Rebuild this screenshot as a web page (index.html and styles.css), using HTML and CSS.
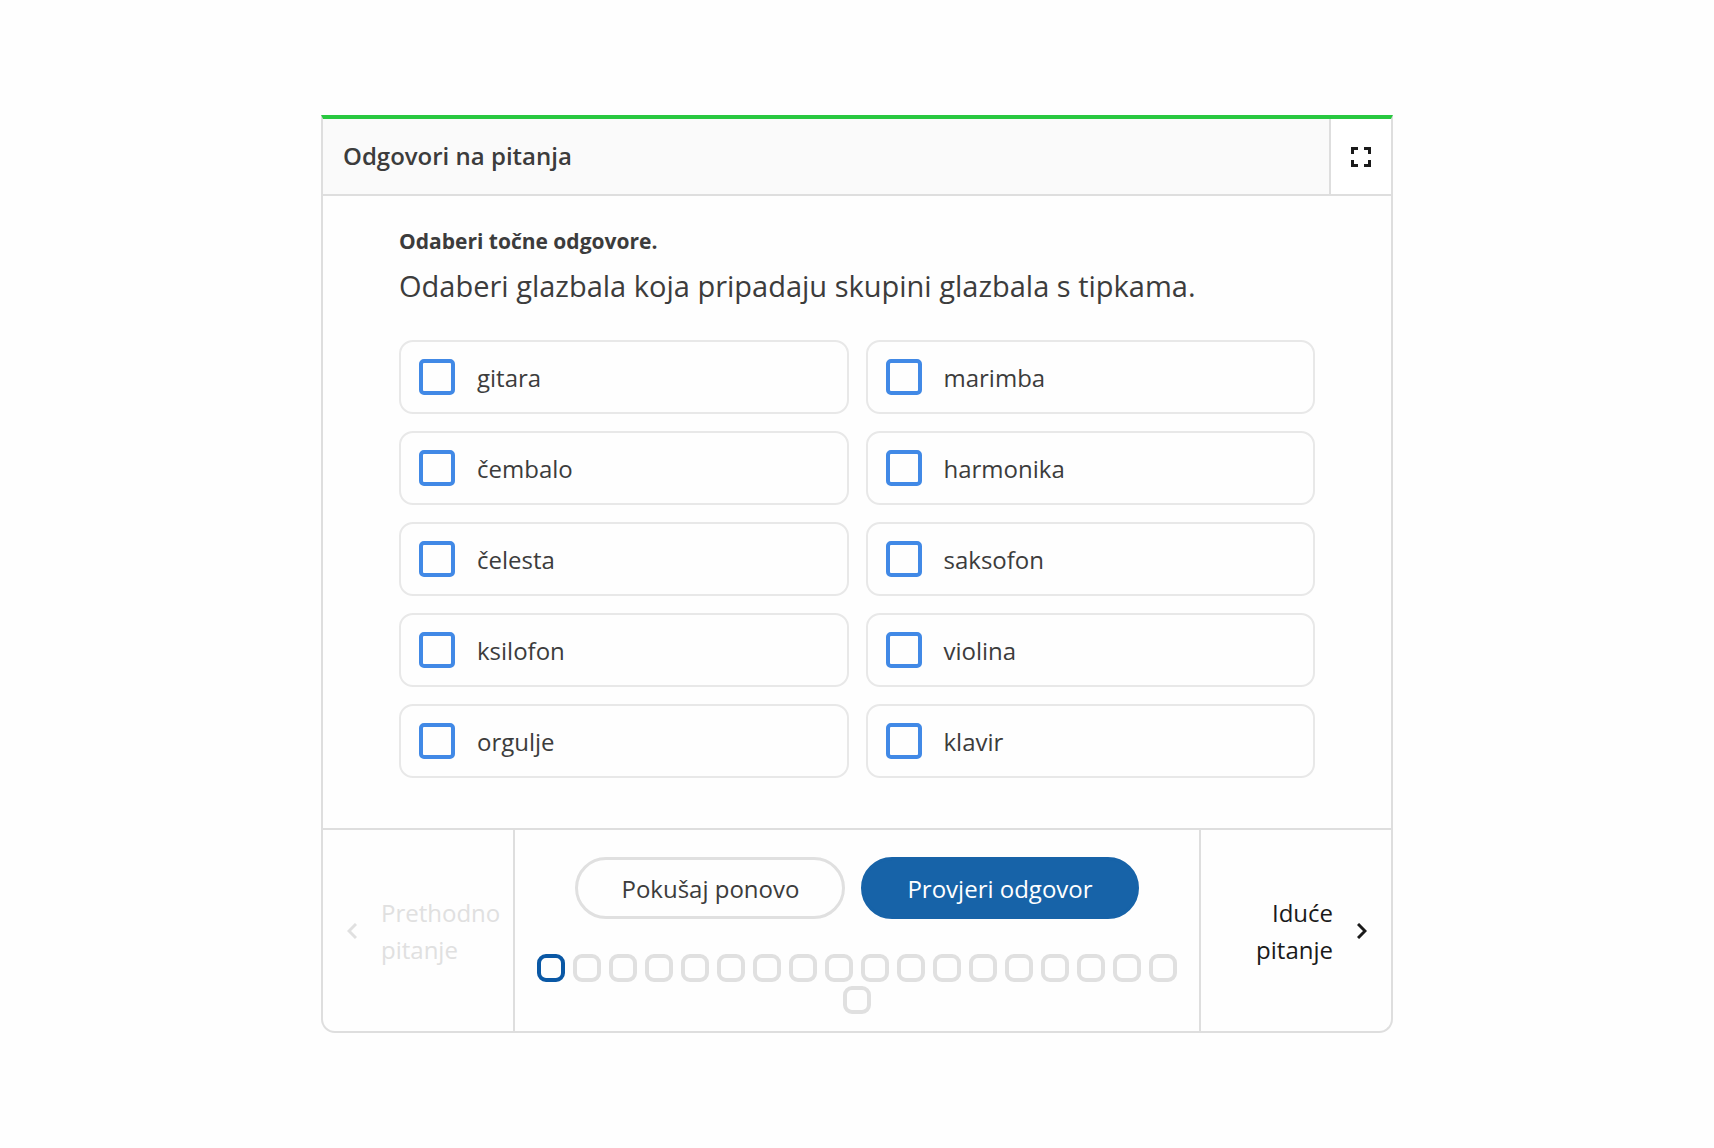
FILE: index.html
```html
<!DOCTYPE html>
<html lang="hr">
<head>
    <meta charset="UTF-8">
    <meta name="viewport" content="width=device-width, initial-scale=1.0">
    <title>Odgovori na pitanja</title>
    <link rel="stylesheet" href="styles.css">
</head>
<body>

    <main class="quiz">
        <!-- Title bar -->
        <header class="quiz-header">
            <h1>Odgovori na pitanja</h1>
            <button type="button" class="fullscreen" aria-label="Cijeli zaslon">
                <svg width="20" height="20" viewBox="0 0 20 20" fill="none" stroke="currentColor" stroke-width="3">
                    <path d="M1.5 7V1.5H7M13 1.5h5.500V7M18.500 13v5.500H13M7 18.500H1.500V13"/>
                </svg>
            </button>
        </header>

        <!-- Question and answers -->
        <section class="question">
            <p class="instruction">Odaberi točne odgovore.</p>
            <h2>Odaberi glazbala koja pripadaju skupini glazbala s tipkama.</h2>
            <div class="answers">
                <label class="answer"><input type="checkbox"><span>gitara</span></label>
                <label class="answer"><input type="checkbox"><span>marimba</span></label>
                <label class="answer"><input type="checkbox"><span>čembalo</span></label>
                <label class="answer"><input type="checkbox"><span>harmonika</span></label>
                <label class="answer"><input type="checkbox"><span>čelesta</span></label>
                <label class="answer"><input type="checkbox"><span>saksofon</span></label>
                <label class="answer"><input type="checkbox"><span>ksilofon</span></label>
                <label class="answer"><input type="checkbox"><span>violina</span></label>
                <label class="answer"><input type="checkbox"><span>orgulje</span></label>
                <label class="answer"><input type="checkbox"><span>klavir</span></label>
            </div>
        </section>

        <!-- Navigation -->
        <footer class="quiz-footer">
            <button type="button" class="nav prev" disabled>
                <svg width="10" height="16" viewBox="0 0 10 16" fill="none" stroke="currentColor" stroke-width="3">
                    <path d="M9 1L2 8l7 7"/>
                </svg>
                <span>Prethodno pitanje</span>
            </button>
            <div class="controls">
                <div class="actions">
                    <button type="button" class="btn">Pokušaj ponovo</button>
                    <button type="button" class="btn btn-primary">Provjeri odgovor</button>
                </div>
                <div class="steps">
                    <button type="button" class="step active" aria-label="Pitanje 1"></button>
                    <button type="button" class="step" aria-label="Pitanje 2"></button>
                    <button type="button" class="step" aria-label="Pitanje 3"></button>
                    <button type="button" class="step" aria-label="Pitanje 4"></button>
                    <button type="button" class="step" aria-label="Pitanje 5"></button>
                    <button type="button" class="step" aria-label="Pitanje 6"></button>
                    <button type="button" class="step" aria-label="Pitanje 7"></button>
                    <button type="button" class="step" aria-label="Pitanje 8"></button>
                    <button type="button" class="step" aria-label="Pitanje 9"></button>
                    <button type="button" class="step" aria-label="Pitanje 10"></button>
                    <button type="button" class="step" aria-label="Pitanje 11"></button>
                    <button type="button" class="step" aria-label="Pitanje 12"></button>
                    <button type="button" class="step" aria-label="Pitanje 13"></button>
                    <button type="button" class="step" aria-label="Pitanje 14"></button>
                    <button type="button" class="step" aria-label="Pitanje 15"></button>
                    <button type="button" class="step" aria-label="Pitanje 16"></button>
                    <button type="button" class="step" aria-label="Pitanje 17"></button>
                    <button type="button" class="step" aria-label="Pitanje 18"></button>
                    <button type="button" class="step" aria-label="Pitanje 19"></button>
                </div>
            </div>
            <button type="button" class="nav next">
                <span>Iduće pitanje</span>
                <svg width="10" height="16" viewBox="0 0 10 16" fill="none" stroke="currentColor" stroke-width="3">
                    <path d="M1 1l7 7-7 7"/>
                </svg>
            </button>
        </footer>
    </main>

</body>
</html>
```
FILE: styles.css
```css
:root {
    --color-text: #3c3c3c;
    --color-dark: #1a1a1a;
    --color-line: #dedede;
    --color-line-light: #e0e0e0;
    --color-answer-line: #e8e8e8;
    --color-header: #fafafa;
    --color-green: #28c840;
    --color-check: #4189e6;
    --color-primary: #1763a8;
    --color-active: #0a58a5;
    --font-family: 'Open Sans', sans-serif;
}

* {
    margin: 0;
    padding: 0;
    box-sizing: border-box;
}

body {
    background-color: #fefefe;
    color: var(--color-text);
    font-family: var(--font-family);
    font-size: 24px;
    line-height: 37px;
}

button {
    font: inherit;
    color: inherit;
    background: none;
    border: none;
    cursor: pointer;
}

/* Card */
.quiz {
    max-width: 1072px;
    margin: 115px auto;
    border: 2px solid var(--color-line);
    border-top: 4px solid var(--color-green);
    border-radius: 0 0 14px 14px;
}

.quiz-header {
    display: flex;
    background-color: var(--color-header);
    border-bottom: 2px solid var(--color-line);
}

.quiz-header h1 {
    flex: 1;
    padding: 18px 20px 20px;
    font-size: 24px;
    font-weight: 600;
}

.fullscreen {
    display: flex;
    align-items: center;
    justify-content: center;
    width: 62px;
    background-color: #fff;
    border-left: 2px solid var(--color-line);
    color: var(--color-dark);
}

/* Question */
.question {
    padding: 29px 76px 50px;
}

.instruction {
    font-size: 21px;
    font-weight: 700;
    line-height: 32px;
}

.question h2 {
    margin-bottom: 25px;
    font-size: 29px;
    font-weight: 400;
    line-height: 58px;
}

.answers {
    display: grid;
    grid-template-columns: 1fr 1fr;
    gap: 17px;
}

.answer {
    display: flex;
    align-items: center;
    gap: 22px;
    height: 74px;
    padding: 0 18px;
    border: 2px solid var(--color-answer-line);
    border-radius: 14px;
    cursor: pointer;
}

.answer input {
    appearance: none;
    width: 36px;
    height: 36px;
    border: 4px solid var(--color-check);
    border-radius: 5px;
}

.answer input:checked {
    background-color: var(--color-check);
}

/* Footer */
.quiz-footer {
    display: flex;
    border-top: 2px solid var(--color-line);
}

.nav {
    display: flex;
    align-items: center;
    gap: 24px;
    width: 192px;
    padding: 0 24px;
    color: var(--color-dark);
}

.prev {
    padding-right: 12px;
    border-right: 2px solid var(--color-line);
    text-align: left;
}

.prev:disabled {
    color: var(--color-line-light);
    cursor: default;
}

.next {
    justify-content: flex-end;
    border-left: 2px solid var(--color-line);
    text-align: right;
}

.nav svg {
    flex-shrink: 0;
}

.controls {
    flex: 1;
    padding: 27px 16px 17px;
}

.actions {
    display: flex;
    justify-content: center;
    gap: 16px;
    margin-bottom: 35px;
}

.btn {
    height: 62px;
    padding: 0 43px;
    border: 3px solid var(--color-line-light);
    border-radius: 31px;
}

.btn-primary {
    background-color: var(--color-primary);
    border-color: var(--color-primary);
    color: #fff;
}

.steps {
    display: flex;
    flex-wrap: wrap;
    justify-content: center;
    gap: 4px 8px;
}

.step {
    width: 28px;
    height: 28px;
    border: 4px solid var(--color-line-light);
    border-radius: 9px;
}

.step.active {
    border-color: var(--color-active);
}

@media (max-width: 900px) {
    .question {
        padding: 24px;
    }

    .answers {
        grid-template-columns: 1fr;
    }

    .actions {
        flex-wrap: wrap;
    }
}
```
